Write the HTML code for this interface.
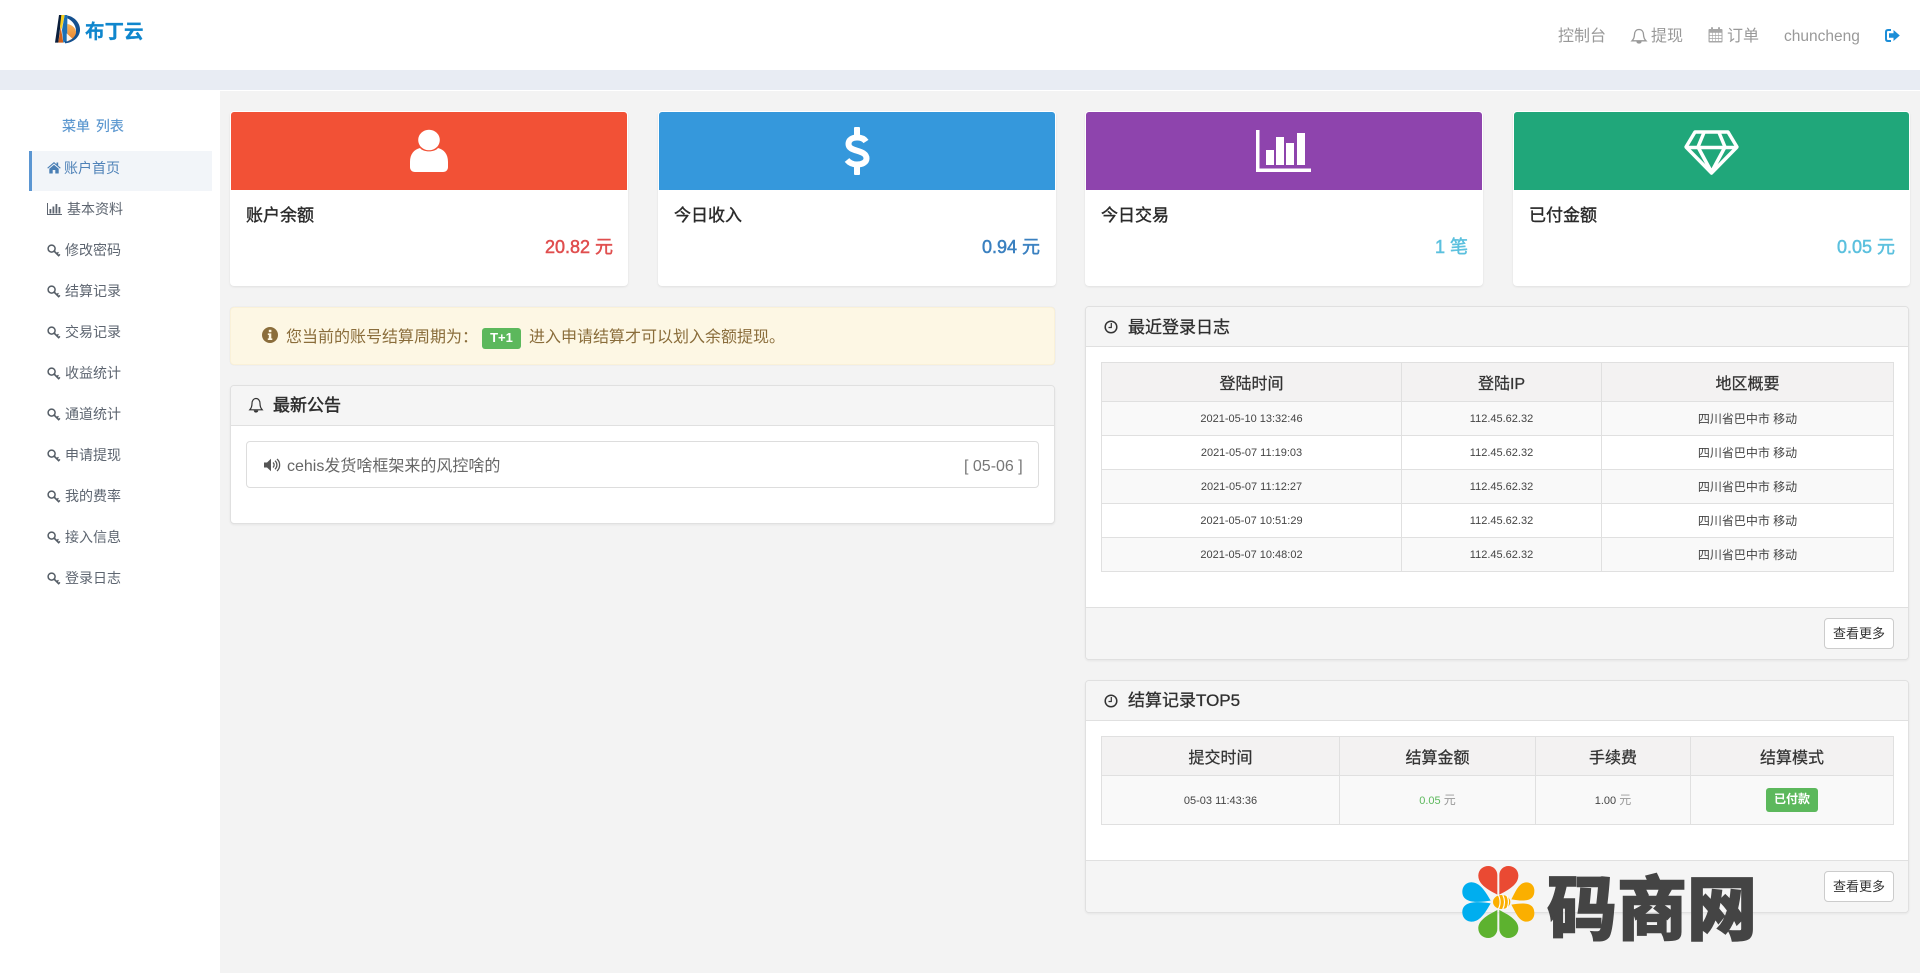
<!DOCTYPE html>
<html lang="zh-CN">
<head>
<meta charset="utf-8">
<title>账户首页</title>
<style>
*{box-sizing:border-box}
html,body{margin:0;padding:0;width:1920px;height:973px;overflow:hidden;background:#f3f3f3;font-family:"Liberation Sans","Noto Sans CJK SC",sans-serif;color:#333}
.a{position:absolute}
.t{position:absolute;white-space:nowrap}
svg{position:absolute;display:block;overflow:visible}
.side{font-size:14px;line-height:20px;color:#5d6570;left:0}
.card{position:absolute;top:111px;height:175px;background:#fff;border-radius:4px;box-shadow:0 1px 2px rgba(0,0,0,.08)}
.card .c{position:absolute;left:1px;right:1px;top:1px;height:78px;border-radius:3px 3px 0 0}
.ct{font-size:17px;line-height:24px;font-weight:400;-webkit-text-stroke:.4px #2b2b2b;color:#2b2b2b}
.val{font-size:18px;line-height:24px;font-weight:400;-webkit-text-stroke:.5px currentColor;text-align:right}
.panel{position:absolute;background:#fff;border:1px solid #e0e0e0;border-radius:4px;box-shadow:0 1px 2px rgba(0,0,0,.06)}
.ph{position:absolute;left:0;right:0;top:0;background:#f5f5f5;border-bottom:1px solid #e0e0e0;border-radius:3px 3px 0 0}
.pf{position:absolute;left:0;right:0;bottom:0;background:#f5f5f5;border-top:1px solid #e0e0e0;border-radius:0 0 3px 3px}
.pt{font-size:17px;line-height:24px;font-weight:400;-webkit-text-stroke:.3px #2f2f2f;color:#2f2f2f}
table{position:absolute;border-collapse:collapse;table-layout:fixed;font-size:11px;color:#444;text-align:center}
td,th{border:1px solid #e0e0e0;padding:0;vertical-align:middle}
th{font-size:16px;font-weight:400;-webkit-text-stroke:.25px #333;color:#333;background:#f3f2f2;height:39px}
.zh{font-size:12px}
.l{line-height:14px}
.l span{line-height:14px;display:inline-block}
tr.o td{background:#f9f9f9}
tr.r td{height:34px}
.btn{position:absolute;background:#fff;border:1px solid #ccc;border-radius:4px;font-size:13px;text-align:center;color:#333;width:70px;height:31px;line-height:30px}
.nav{font-size:16px;line-height:22px;color:#999}
</style>
</head>
<body>
<!-- top bar -->
<div class="a" style="left:0;top:0;width:1920px;height:70px;background:#fff"></div>
<div class="a" style="left:0;top:70px;width:1920px;height:20px;background:#e8ecf3"></div>
<div class="a" style="left:0;top:90px;width:1920px;height:1px;background:#fff"></div>
<div class="a" style="left:0;top:90px;width:220px;height:883px;background:#fff"></div>

<!-- logo -->
<svg style="left:30px;top:0" width="130" height="60" viewBox="0 0 390 180">
<defs><linearGradient id="lg" x1="0" y1="0" x2="0" y2="1"><stop offset="0" stop-color="#f7b45a"/><stop offset="1" stop-color="#ea7f2a"/></linearGradient></defs>
<polygon points="75,128 87,45 95,45 85,128" fill="#0b1f3c"/>
<polygon points="85,128 92,80 100,128" fill="#d2601a"/>
<polygon points="94,45 104,45 95,88 90,80" fill="#f6cf1f"/>
<polygon points="104,45 112,45 112,125 100,128 96,90" fill="#1b6fb4"/>
<path d="M112 47C135 50 152 72 150 92 148 112 130 128 105 130L105 124C122 122 138 110 138 92 138 75 125 60 112 55Z" fill="#14508f"/>
<path d="M112 72C127 74 139 86 138 98 136 110 125 120 112 124Z" fill="url(#lg)"/>
<polygon points="110,100 127,116 110,125" fill="#fff" opacity=".9"/>
</svg>
<div class="t" style="left:85px;top:17px;font-size:19.500px;line-height:26px;font-weight:700;color:#0f86cd;-webkit-text-stroke:.2px #0f86cd;font-family:'Noto Sans CJK SC','Liberation Sans',sans-serif">布丁云</div>

<!-- nav right -->
<div class="t nav" style="left:1558px;top:26px">控制台</div>
<svg style="left:1631px;top:28px" width="16" height="17" viewBox="0 0 16 17" fill="none" stroke="#999" stroke-width="1.300"><path d="M8 1.500C5 1.500 3.600 3.800 3.500 6.500 3.400 9.500 2.800 11 1 12.800H15C13.200 11 12.600 9.500 12.500 6.500 12.400 3.800 11 1.500 8 1.500Z"/><path d="M6 13.500C6.300 15.500 9.700 15.500 10 13.500" fill="#999"/></svg>
<div class="t nav" style="left:1651px;top:26px">提现</div>
<svg style="left:1708px;top:27px" width="15" height="16" viewBox="0 0 15 16"><rect x=".5" y="2" width="14" height="13.500" rx="1" fill="#a8a8a8"/><g fill="#fff"><rect x="1.700" y="5.800" width="2.500" height="2.200"/><rect x="4.800" y="5.800" width="2.500" height="2.200"/><rect x="7.900" y="5.800" width="2.500" height="2.200"/><rect x="11" y="5.800" width="2.500" height="2.200"/><rect x="1.700" y="8.800" width="2.500" height="2.200"/><rect x="4.800" y="8.800" width="2.500" height="2.200"/><rect x="7.900" y="8.800" width="2.500" height="2.200"/><rect x="11" y="8.800" width="2.500" height="2.200"/><rect x="1.700" y="11.800" width="2.500" height="2.200"/><rect x="4.800" y="11.800" width="2.500" height="2.200"/><rect x="7.900" y="11.800" width="2.500" height="2.200"/><rect x="11" y="11.800" width="2.500" height="2.200"/></g><rect x="3" y="0" width="2" height="4" rx="1" fill="#a8a8a8"/><rect x="10" y="0" width="2" height="4" rx="1" fill="#a8a8a8"/></svg>
<div class="t nav" style="left:1727px;top:26px">订单</div>
<div class="t nav" style="left:1784px;top:26px;font-size:15.500px">chuncheng</div>
<svg style="left:1885px;top:29px" width="15" height="13" viewBox="0 0 15 13"><path d="M6 1H3C1.500 1 1 2 1 3V10C1 11 1.500 12 3 12H6" fill="none" stroke="#1c8ed8" stroke-width="2"/><path d="M8.500 1 14.800 6.500 8.500 12V8.800H4V4.200H8.500Z" fill="#1c8ed8"/></svg>

<!-- sidebar -->
<div class="t" style="left:62px;top:116px;font-size:14px;line-height:20px;color:#5a96cf;word-spacing:2px;-webkit-text-stroke:.15px #5a96cf">菜单 列表</div>
<div class="a" style="left:29px;top:151px;width:183px;height:40px;background:#f2f5f9;border-left:3px solid #5b96d2"></div>
<svg style="left:47px;top:161px" width="14" height="13" viewBox="0 0 14 13"><path d="M7 1 .3 6.800 1 7.600 7 2.500 13 7.600 13.700 6.800 11.200 4.600V1.500H9.500V3.200Z" fill="#4a7fb5"/><path d="M2.300 7.700 7 3.700 11.700 7.700V12.500H8.300V9H5.700V12.500H2.300Z" fill="#4a7fb5"/></svg>
<div class="t side" style="left:64px;top:158px;color:#4f82b8">账户首页</div>

<svg style="left:47px;top:203px" width="15" height="12" viewBox="0 0 15 12"><path d="M.5 0V11.500H15" fill="none" stroke="#5d6570"/><g fill="#5d6570"><rect x="2.500" y="6" width="1.800" height="4.500"/><rect x="5.500" y="3.500" width="1.800" height="7"/><rect x="8.500" y="1" width="1.800" height="9.500"/><rect x="11.500" y="4" width="1.800" height="6.500"/></g></svg>
<div class="t side" style="left:67px;top:199px">基本资料</div>

<svg width="0" height="0" style="left:0;top:0"><defs><g id="k"><circle cx="4.600" cy="4.600" r="3.500" fill="none" stroke="#555d66" stroke-width="1.500"/><path d="M7.200 7.200 12.200 12.200" stroke="#555d66" stroke-width="1.700" fill="none"/><path d="M9.800 9.700 11.500 8.300M11.700 11.500 13 10.400" stroke="#555d66" stroke-width="1.400" fill="none"/></g></defs></svg>

<svg style="left:47px;top:244px" width="13" height="13" viewBox="0 0 13 13"><use href="#k"/></svg><div class="t side" style="left:65px;top:240px">修改密码</div>
<svg style="left:47px;top:285px" width="13" height="13" viewBox="0 0 13 13"><use href="#k"/></svg><div class="t side" style="left:65px;top:281px">结算记录</div>
<svg style="left:47px;top:326px" width="13" height="13" viewBox="0 0 13 13"><use href="#k"/></svg><div class="t side" style="left:65px;top:322px">交易记录</div>
<svg style="left:47px;top:367px" width="13" height="13" viewBox="0 0 13 13"><use href="#k"/></svg><div class="t side" style="left:65px;top:363px">收益统计</div>
<svg style="left:47px;top:408px" width="13" height="13" viewBox="0 0 13 13"><use href="#k"/></svg><div class="t side" style="left:65px;top:404px">通道统计</div>
<svg style="left:47px;top:449px" width="13" height="13" viewBox="0 0 13 13"><use href="#k"/></svg><div class="t side" style="left:65px;top:445px">申请提现</div>
<svg style="left:47px;top:490px" width="13" height="13" viewBox="0 0 13 13"><use href="#k"/></svg><div class="t side" style="left:65px;top:486px">我的费率</div>
<svg style="left:47px;top:531px" width="13" height="13" viewBox="0 0 13 13"><use href="#k"/></svg><div class="t side" style="left:65px;top:527px">接入信息</div>
<svg style="left:47px;top:572px" width="13" height="13" viewBox="0 0 13 13"><use href="#k"/></svg><div class="t side" style="left:65px;top:568px">登录日志</div>

<!-- cards -->
<div class="card" style="left:230px;width:398px"><div class="c" style="background:#f25136"></div></div>
<div class="card" style="left:658px;width:398px"><div class="c" style="background:#3598dc"></div></div>
<div class="card" style="left:1085px;width:398px"><div class="c" style="background:#8e44ad"></div></div>
<div class="card" style="left:1513px;width:397px"><div class="c" style="background:#20a77a"></div></div>

<svg style="left:410px;top:130px" width="38" height="42" viewBox="0 0 38 42"><ellipse cx="19" cy="10" rx="10.800" ry="10.300" fill="#fff"/><path d="M10 18C13 22.500 25 22.500 28 18 34 19.500 38 24 38 32V37C38 40 36 42 33 42H5C2 42 0 40 0 37V32C0 24 4 19.500 10 18Z" fill="#fff"/></svg>

<svg style="left:844px;top:127px" width="26" height="48" viewBox="0 0 26 48"><path d="M22 14.500C20 11.500 16.500 10.500 13 10.500 8 10.500 4.500 13 4.500 17 4.500 25.500 22.500 22 22.500 31.500 22.500 35.500 18 37.500 13 37.500 9 37.500 5.500 36 3 33" fill="none" stroke="#fff" stroke-width="6"/><rect x="10" y="0" width="6" height="11" rx="1" fill="#fff"/><rect x="10" y="37" width="6" height="11" rx="1" fill="#fff"/></svg>

<svg style="left:1256px;top:130px" width="55" height="42" viewBox="0 0 55 42"><path d="M0 0V42H55V38.500H3.500V0Z" fill="#fff"/><g fill="#fff"><rect x="10" y="20" width="8" height="15"/><rect x="20" y="7" width="8" height="28"/><rect x="30" y="13" width="8" height="22"/><rect x="41" y="3" width="8" height="32"/></g></svg>

<svg style="left:1684px;top:130px" width="55" height="45" viewBox="0 0 55 45" fill="none" stroke="#fff" stroke-width="3.500" stroke-linejoin="round"><path d="M11 2H44L53 17 27.500 43 2 17Z"/><path d="M2 17.500H53"/><path d="M20 2.500 14 17 27.500 42 41 17 35 2.500"/></svg>

<div class="t ct" style="left:246px;top:204px">账户余额</div>
<div class="t val" style="right:1307px;top:235px;color:#e04e4e">20.82 元</div>
<div class="t ct" style="left:674px;top:204px">今日收入</div>
<div class="t val" style="right:880px;top:235px;color:#3a80c0">0.94 元</div>
<div class="t ct" style="left:1101px;top:204px">今日交易</div>
<div class="t val" style="right:452px;top:235px;color:#5bc0de">1 笔</div>
<div class="t ct" style="left:1529px;top:204px">已付金额</div>
<div class="t val" style="right:25px;top:235px;color:#5bc0de">0.05 元</div>

<!-- alert -->
<div class="a" style="left:230px;top:307px;width:825px;height:58px;background:#fdf7e4;border:1px solid #faf1d8;border-radius:4px;box-shadow:0 0 1px rgba(0,0,0,.12)"></div>
<svg style="left:262px;top:327px" width="16" height="16" viewBox="0 0 16 16"><circle cx="8" cy="8" r="8" fill="#8a6d3b"/><rect x="6.800" y="2.800" width="2.600" height="2.400" fill="#fdf7e4"/><path d="M5.800 6.400H9.300V11.400H10.300V13H5.800V11.400H6.800V8H5.800Z" fill="#fdf7e4"/></svg>
<div class="t" style="left:286px;top:326px;font-size:16px;line-height:24px;color:#8a6d3b">您当前的账号结算周期为：</div>
<div class="a" style="left:482px;top:328px;width:39px;height:21px;background:#5cb85c;border-radius:3px;color:#fff;font-size:13px;font-weight:700;line-height:20px;text-align:center">T+1</div>
<div class="t" style="left:529px;top:326px;font-size:16px;line-height:24px;color:#8a6d3b">进入申请结算才可以划入余额提现。</div>

<!-- notice -->
<div class="panel" style="left:230px;top:385px;width:825px;height:139px"><div class="ph" style="height:40px"></div></div>
<svg style="left:249px;top:397px" width="14" height="17" viewBox="0 0 14 17" fill="none" stroke="#333" stroke-width="1.200"><path d="M7 1.500C4.500 1.500 3 3.800 3 6.500 3 9.500 2.400 11 .8 12.800H13.200C11.600 11 11 9.500 11 6.500 11 3.800 9.500 1.500 7 1.500Z"/><path d="M5.300 13.500C5.500 15.500 8.500 15.500 8.700 13.500" fill="#333"/></svg>
<div class="t pt" style="left:273px;top:394px;-webkit-text-stroke:.5px #2f2f2f">最新公告</div>
<div class="a" style="left:246px;top:441px;width:793px;height:47px;background:#fff;border:1px solid #ddd;border-radius:4px"></div>
<svg style="left:264px;top:458px" width="16" height="14" viewBox="0 0 16 14"><path d="M0 4.500H3L7 .8V13.200L3 9.500H0Z" fill="#555"/><path d="M9 4.500C10.500 5.800 10.500 8.200 9 9.500M11 2.800C13.500 5 13.500 9 11 11.200M13 1C16.500 4 16.500 10 13 13" fill="none" stroke="#555" stroke-width="1.300"/></svg>
<div class="t" style="left:287px;top:455px;font-size:16px;line-height:24px;color:#666">cehis发货啥框架来的风控啥的</div>
<div class="t" style="left:964px;top:455px;font-size:16px;line-height:24px;color:#777">[ 05-06 ]</div>

<!-- login log -->
<div class="panel" style="left:1085px;top:306px;width:824px;height:354px"><div class="ph" style="height:40px"></div><div class="pf" style="height:52px"></div></div>
<svg style="left:1104px;top:320px" width="14" height="14" viewBox="0 0 14 14" fill="none" stroke="#333"><circle cx="7" cy="7" r="5.800" stroke-width="1.500"/><path d="M7.300 3V7.500H4.500" stroke-width="1.200"/></svg>
<div class="t pt" style="left:1128px;top:316px">最近登录日志</div>
<table style="left:1101px;top:362px;width:792px">
<colgroup><col style="width:300px"><col style="width:200px"><col style="width:292px"></colgroup>
<tr><th>登陆时间</th><th>登陆IP</th><th>地区概要</th></tr>
<tr class="r o"><td>2021-05-10 13:32:46</td><td>112.45.62.32</td><td class="zh">四川省巴中市 移动</td></tr>
<tr class="r"><td>2021-05-07 11:19:03</td><td>112.45.62.32</td><td class="zh">四川省巴中市 移动</td></tr>
<tr class="r o"><td>2021-05-07 11:12:27</td><td>112.45.62.32</td><td class="zh">四川省巴中市 移动</td></tr>
<tr class="r"><td>2021-05-07 10:51:29</td><td>112.45.62.32</td><td class="zh">四川省巴中市 移动</td></tr>
<tr class="r o"><td>2021-05-07 10:48:02</td><td>112.45.62.32</td><td class="zh">四川省巴中市 移动</td></tr>
</table>
<div class="btn" style="left:1824px;top:618px">查看更多</div>

<!-- settlement -->
<div class="panel" style="left:1085px;top:680px;width:824px;height:233px"><div class="ph" style="height:40px"></div><div class="pf" style="height:52px"></div></div>
<svg style="left:1104px;top:694px" width="14" height="14" viewBox="0 0 14 14" fill="none" stroke="#333"><circle cx="7" cy="7" r="5.800" stroke-width="1.500"/><path d="M7.300 3V7.500H4.500" stroke-width="1.200"/></svg>
<div class="t pt" style="left:1128px;top:689px">结算记录TOP5</div>
<table style="left:1101px;top:736px;width:792px">
<colgroup><col style="width:238px"><col style="width:196px"><col style="width:155px"><col style="width:203px"></colgroup>
<tr><th>提交时间</th><th>结算金额</th><th>手续费</th><th>结算模式</th></tr>
<tr class="o"><td style="height:49px;padding-top:1px">05-03 11:43:36</td><td class="l"><span style="color:#5cb85c">0.05</span> <span class="zh" style="color:#999">元</span></td><td class="l">1.00 <span class="zh" style="color:#999">元</span></td><td></td></tr>
</table>
<div class="a" style="left:1766px;top:788px;width:52px;height:24px;background:#5cb85c;border-radius:3px;color:#fff;font-size:12px;font-weight:700;line-height:23px;text-align:center">已付款</div>
<div class="btn" style="left:1824px;top:871px">查看更多</div>

<!-- watermark -->
<svg style="left:1440px;top:860px" width="140" height="100" viewBox="0 0 420 300">
<g fill="#ea4a33"><path d="M172 104C150 92 113 75 115 45 116 28 130 18 145 18 160 18 172 30 172 45Z"/><path d="M178 104C200 92 237 75 235 45 234 28 220 18 205 18 190 18 178 30 178 45Z"/></g>
<g fill="#5db22f"><path d="M172 150C150 162 113 179 115 207 116 224 130 234 145 234 160 234 172 222 172 207Z"/><path d="M178 150C200 162 237 179 235 207 234 224 220 234 205 234 190 234 178 222 178 207Z"/></g>
<g fill="#00aeef"><path d="M152 122C120 127 65 133 67 93 68 76 82 66 97 67 122 69 138 98 152 122Z"/><path d="M152 130C120 125 65 119 67 159 68 176 82 186 97 185 122 183 138 154 152 130Z"/></g>
<g fill="#fbaf00"><path d="M214 118C226 96 236 68 258 67 273 66 284 78 283 93 283 130 240 122 214 118Z"/><path d="M214 134C226 156 236 184 258 185 273 186 284 174 283 159 283 122 240 130 214 134Z"/></g>
<ellipse cx="185" cy="126" rx="26" ry="21" fill="#fbaf00"/>
<g stroke="#fff" stroke-width="3.500" fill="none"><path d="M175 105C182 118 182 134 175 147"/><path d="M188 104C195 118 195 134 188 148"/><path d="M200 106C207 118 207 134 200 146"/></g>
</svg>
<div class="t" style="left:1547px;top:859px;font-size:70px;line-height:92px;font-weight:900;color:#444;-webkit-text-stroke:1.500px #444;font-family:'Noto Sans CJK SC',sans-serif">码商网</div>
</body>
</html>
